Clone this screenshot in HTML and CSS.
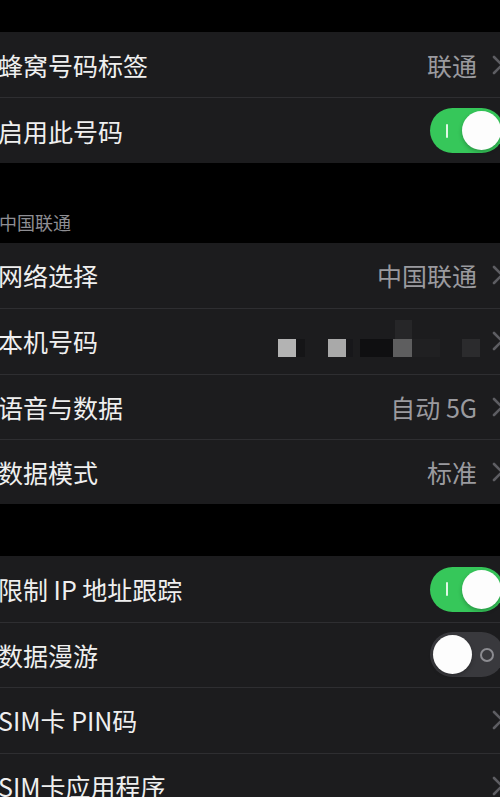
FILE: index.html
```html
<!DOCTYPE html>
<html lang="zh-CN">
<head>
<meta charset="utf-8">
<title>蜂窝网络</title>
<link rel="stylesheet" href="styles.css">
</head>
<body>
<div class="screen">
  <div class="top-gap"></div>

  <div class="group">
    <div class="row">
      <span class="label">蜂窝号码标签</span>
      <div class="accessory">
        <span class="value">联通</span>
        <svg class="chevron" width="12" height="20" viewBox="0 0 12 20"><path d="M2 2 L10 10 L2 18"/></svg>
      </div>
    </div>
    <div class="row">
      <span class="label">启用此号码</span>
      <div class="accessory">
        <div class="toggle on"><span class="mark-i"></span><span class="knob"></span></div>
      </div>
    </div>
  </div>

  <div class="section-gap">
    <div class="section-header">中国联通</div>
  </div>

  <div class="group">
    <div class="row">
      <span class="label">网络选择</span>
      <div class="accessory">
        <span class="value">中国联通</span>
        <svg class="chevron" width="12" height="20" viewBox="0 0 12 20"><path d="M2 2 L10 10 L2 18"/></svg>
      </div>
    </div>
    <div class="row">
      <span class="label">本机号码</span>
      <div class="accessory">
        <svg class="mosaic" width="220" height="65" viewBox="0 0 220 65">
          <rect x="34" y="30" width="9" height="18" fill="#151517"/>
          <rect x="16" y="30" width="18" height="18" fill="#b3b3b3"/>
          <rect x="84" y="30" width="7" height="18" fill="#17171a"/>
          <rect x="66" y="30" width="18" height="18" fill="#a9a9a9"/>
          <rect x="98" y="30" width="33" height="18" fill="#0f0f11"/>
          <rect x="133" y="11" width="17" height="19" fill="#262628"/>
          <rect x="131" y="30" width="19" height="18" fill="#5e5e5f"/>
          <rect x="150" y="30" width="28" height="18" fill="#202022"/>
          <rect x="200" y="30" width="18" height="18" fill="#2b2b2d"/>
        </svg>
        <svg class="chevron" width="12" height="20" viewBox="0 0 12 20"><path d="M2 2 L10 10 L2 18"/></svg>
      </div>
    </div>
    <div class="row">
      <span class="label">语音与数据</span>
      <div class="accessory">
        <span class="value">自动 5G</span>
        <svg class="chevron" width="12" height="20" viewBox="0 0 12 20"><path d="M2 2 L10 10 L2 18"/></svg>
      </div>
    </div>
    <div class="row">
      <span class="label">数据模式</span>
      <div class="accessory">
        <span class="value">标准</span>
        <svg class="chevron" width="12" height="20" viewBox="0 0 12 20"><path d="M2 2 L10 10 L2 18"/></svg>
      </div>
    </div>
  </div>

  <div class="section-gap small"></div>

  <div class="group">
    <div class="row">
      <span class="label">限制 IP 地址跟踪</span>
      <div class="accessory">
        <div class="toggle on"><span class="mark-i"></span><span class="knob"></span></div>
      </div>
    </div>
    <div class="row">
      <span class="label">数据漫游</span>
      <div class="accessory">
        <div class="toggle off"><span class="knob"></span><span class="mark-o"></span></div>
      </div>
    </div>
    <div class="row">
      <span class="label">SIM卡 PIN码</span>
      <div class="accessory">
        <svg class="chevron" width="12" height="20" viewBox="0 0 12 20"><path d="M2 2 L10 10 L2 18"/></svg>
      </div>
    </div>
    <div class="row">
      <span class="label">SIM卡应用程序</span>
      <div class="accessory">
        <svg class="chevron" width="12" height="20" viewBox="0 0 12 20"><path d="M2 2 L10 10 L2 18"/></svg>
      </div>
    </div>
  </div>
</div>
</body>
</html>
```

FILE: styles.css
```css
html, body {
  margin: 0;
  padding: 0;
  background: #000;
}

body {
  width: 500px;
  height: 797px;
  overflow: hidden;
  font-family: "Noto Sans CJK SC", "Noto Sans", sans-serif;
  color: #f0f0f0;
}

.screen {
  width: 500px;
  display: flex;
  flex-direction: column;
}

.top-gap {
  height: 32px;
}

.group {
  background: #1c1c1e;
  display: flex;
  flex-direction: column;
}

.row {
  height: 65.4px;
  box-sizing: border-box;
  display: flex;
  align-items: center;
  overflow: hidden;
}

.row + .row {
  border-top: 1px solid #2e2e31;
}

.label {
  font-size: 25px;
  line-height: 30px;
  margin-left: -2px;
  white-space: nowrap;
  color: #efefef;
}

.accessory {
  margin-left: auto;
  display: flex;
  align-items: center;
  gap: 15px;
}

.value {
  font-size: 25px;
  line-height: 30px;
  color: #9a9a9f;
  white-space: nowrap;
}

.chevron {
  flex: none;
  margin-right: -4px;
}

.chevron path {
  fill: none;
  stroke: #5d5d62;
  stroke-width: 2.6;
  stroke-linecap: round;
  stroke-linejoin: round;
}

.mosaic {
  flex: none;
  margin-right: -5px;
  margin-left: -10px;
}

.section-gap {
  height: 80px;
  display: flex;
  flex-direction: column;
  justify-content: flex-end;
}

.section-gap.small {
  height: 52px;
}

.section-header {
  font-size: 18px;
  line-height: 24px;
  padding-bottom: 9px;
  margin-left: -1px;
  color: #8e8e93;
}

.toggle {
  flex: none;
  width: 74px;
  height: 45px;
  box-sizing: border-box;
  padding: 3px;
  border-radius: 23px;
  display: flex;
  align-items: center;
  margin-right: -4px;
}

.toggle.on {
  background: #36c75a;
}

.toggle.off {
  background: #39393d;
}

.knob {
  flex: none;
  width: 39px;
  height: 39px;
  border-radius: 50%;
  background: #fdfdfd;
  box-shadow: 0 2px 4px rgba(0, 0, 0, 0.25);
}

.toggle.on .knob {
  margin-left: auto;
}

.mark-i {
  width: 2px;
  height: 14px;
  margin-left: 13px;
  background: rgba(255, 255, 255, 0.85);
  border-radius: 1px;
}

.mark-o {
  width: 10px;
  height: 10px;
  margin-left: 8px;
  border: 2px solid #8c8c91;
  border-radius: 50%;
}
```
